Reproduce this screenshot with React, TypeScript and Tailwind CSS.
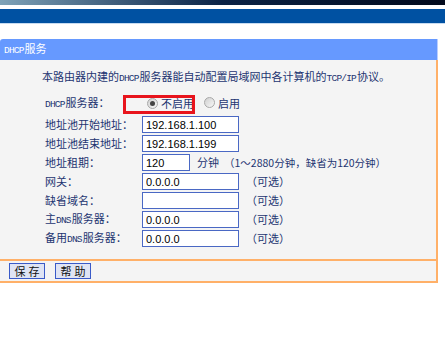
import React from "react";

const label = "text-[11px] text-[#1d3471] w-[97px] shrink-0 whitespace-nowrap";
const inputCls =
  "h-[17px] border border-[#4a68c4] bg-white px-[3px] text-[11px] leading-[15px] text-black font-['Liberation_Sans',Arial,sans-serif] outline-none";

// small bitmap-like latin used by the router UI
const L: React.FC<{ children: React.ReactNode }> = ({ children }) => (
  <span className="font-['Liberation_Mono',monospace] text-[9.5px] tracking-[-0.8px] mr-[1px]">{children}</span>
);

const Radio: React.FC<{ checked?: boolean }> = ({ checked }) => (
  <span className="inline-flex h-[11px] w-[11px] items-center justify-center rounded-full border border-[#a8a8a8] bg-gradient-to-br from-[#d0d0d0] to-[#f8f8f8]">
    {checked && <span className="h-[5px] w-[5px] rounded-full bg-[#444]" />}
  </span>
);

const Row: React.FC<{ name: React.ReactNode; value: string; note?: React.ReactNode; short?: boolean }> = ({
  name,
  value,
  note,
  short,
}) => (
  <div className="flex h-[19px] items-center">
    <span className={label}>{name}</span>
    <input
      readOnly
      value={value}
      className={`${inputCls} ${short ? "w-[48px]" : "w-[97px]"}`}
    />
    {note && <span className="ml-[7px] text-[11px] text-[#1d3471] whitespace-nowrap">{note}</span>}
  </div>
);

const Btn: React.FC<{ children: React.ReactNode }> = ({ children }) => (
  <button className="h-[16px] w-[36px] whitespace-nowrap border border-[#3a5ac8] bg-[#dfe4f4] text-[11px] leading-[14px] tracking-[3px] pl-[3px] text-[#111]">
    {children}
  </button>
);

export default function App() {
  return (
    <div className="w-[445px] h-[351px] bg-white overflow-hidden font-['Noto_Sans_CJK_SC','Noto_Sans',sans-serif]">
      {/* banner strip */}
      <div className="h-[5px] bg-gradient-to-r from-[#7fa3b8] via-[#0b2346] to-[#020a1c]" />
      <div className="h-[4px]" />
      <div className="h-[14px] bg-[#0051a2]" />
      <div className="h-[1px] bg-[#c6dbf1]" />
      <div className="h-[15px]" />

      <div className="w-[438px]">
        <div className="flex h-[21px] items-center rounded-tl-[3px] bg-[#6699ff] pl-[4px] border-r border-[#b9cdff]">
          <span className="text-[11px] text-white">
            <L>DHCP</L>服务
          </span>
        </div>

        <div className="bg-[#f4f4f4] border-r-2 border-[#ffb068] pb-[11px]">
          <p className="pl-[42px] pt-[8px] h-[24px] text-[11px] leading-[16px] text-[#1d3471] whitespace-nowrap">
            本路由器内建的<L>DHCP</L>服务器能自动配置局域网中各计算机的<L>TCP/IP</L>协议。
          </p>

          <div className="pl-[45px] mt-[9px]">
            <div className="relative flex h-[20px] items-center">
              <span className={label}>
                <L>DHCP</L>服务器：
              </span>
              <div className="flex items-center pl-[5px] text-[11px] text-[#1d3471]">
                <Radio checked />
                <span className="ml-[3px]">不启用</span>
                <span className="ml-[10px]">
                  <Radio />
                </span>
                <span className="ml-[3px]">启用</span>
              </div>
              <div className="absolute left-[78px] top-[2px] h-[19px] w-[72px] border-[3px] border-[#e8141c]" />
            </div>

            <div className="mt-[2px]">
              <Row name="地址池开始地址：" value="192.168.1.100" />
              <Row name="地址池结束地址：" value="192.168.1.199" />
              <Row
                name="地址租期："
                value="120"
                short
                note={
                  <>
                    分钟<span className="ml-[5px] text-[10.5px]">（1～2880分钟，缺省为120分钟）</span>
                  </>
                }
              />
              <Row name="网关：" value="0.0.0.0" note="（可选）" />
              <Row name="缺省域名：" value="" note="（可选）" />
              <Row
                name={
                  <>
                    主<L>DNS</L>服务器：
                  </>
                }
                value="0.0.0.0"
                note="（可选）"
              />
              <Row
                name={
                  <>
                    备用<L>DNS</L>服务器：
                  </>
                }
                value="0.0.0.0"
                note="（可选）"
              />
            </div>
          </div>
        </div>

        <div className="flex h-[24px] items-center gap-[10px] bg-[#f4f4f4] border-y-2 border-[#ffb068] border-r-2 pl-[9px]">
          <Btn>保存</Btn>
          <Btn>帮助</Btn>
        </div>
      </div>
    </div>
  );
}
